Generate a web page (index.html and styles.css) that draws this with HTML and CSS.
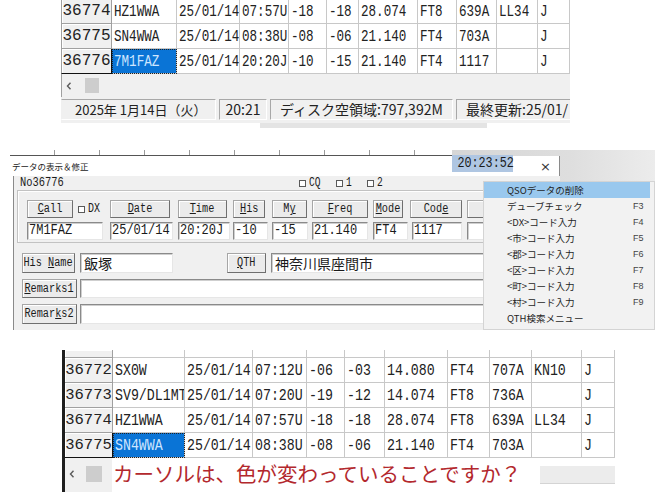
FILE: index.html
```html
<!DOCTYPE html>
<html lang="ja">
<head>
<meta charset="utf-8">
<title>QSO</title>
<link rel="stylesheet" href="styles.css">
</head>
<body>
<main class="page">

<section class="shot-top">
  <div class="grid g-top">
    <div class="row">
      <div class="c no"><span>36774</span></div>
      <div class="c"><span>HZ1WWA</span></div>
      <div class="c"><span>25/01/14</span></div>
      <div class="c"><span>07:57U</span></div>
      <div class="c"><span>-18</span></div>
      <div class="c"><span>-18</span></div>
      <div class="c"><span>28.074</span></div>
      <div class="c"><span>FT8</span></div>
      <div class="c"><span>639A</span></div>
      <div class="c"><span>LL34</span></div>
      <div class="c"><span>J</span></div>
    </div>
    <div class="row">
      <div class="c no"><span>36775</span></div>
      <div class="c"><span>SN4WWA</span></div>
      <div class="c"><span>25/01/14</span></div>
      <div class="c"><span>08:38U</span></div>
      <div class="c"><span>-08</span></div>
      <div class="c"><span>-06</span></div>
      <div class="c"><span>21.140</span></div>
      <div class="c"><span>FT4</span></div>
      <div class="c"><span>703A</span></div>
      <div class="c"><span></span></div>
      <div class="c"><span>J</span></div>
    </div>
    <div class="row">
      <div class="c no cur"><span>36776</span></div>
      <div class="c sel"><span>7M1FAZ</span></div>
      <div class="c"><span>25/01/14</span></div>
      <div class="c"><span>20:20J</span></div>
      <div class="c"><span>-10</span></div>
      <div class="c"><span>-15</span></div>
      <div class="c"><span>21.140</span></div>
      <div class="c"><span>FT4</span></div>
      <div class="c"><span>1117</span></div>
      <div class="c"><span></span></div>
      <div class="c"><span>J</span></div>
    </div>
  </div>
  <div class="hscroll">
    <svg class="arr" width="6" height="8" viewBox="0 0 6 8"><path d="M4.5 0.8 L1.5 4 L4.5 7.2" fill="none" stroke="#5a5a5a" stroke-width="1.4"/></svg>
    <span class="thumb"></span>
  </div>
  <div class="status">
    <div class="panel p1">2025年 1月14日（火）</div>
    <div class="panel p2">20:21</div>
    <div class="panel p3">ディスク空領域:797,392M</div>
    <div class="panel p4">最終更新:25/01/</div>
  </div>
  <div class="under"><span class="u-gray"></span></div>
</section>

<section class="shot-dialog">
  <div class="behind"></div>
  <div class="dialog">
    <div class="titlebar">
      <span class="title">データの表示＆修正</span>
      <span class="clock"><span>20:23:52</span></span>
      <span class="close">×</span>
    </div>
    <div class="dbody">
      <div class="norow">
        <span class="nolabel"><span>No36776</span></span>
        <span class="checks">
          <span class="cb"></span><span class="cbt">CQ</span>
          <span class="cb"></span><span class="cbt">1</span>
          <span class="cb"></span><span class="cbt">2</span>
        </span>
      </div>
      <div class="group">
        <div class="brow">
          <div class="cell-call">
            <div class="btn b-call"><span><u>C</u>all</span></div>
            <span class="cb dx"></span><span class="dxt">DX</span>
          </div>
          <div class="btn b-date"><span><u>D</u>ate</span></div>
          <div class="btn b-time"><span><u>T</u>ime</span></div>
          <div class="btn b-his"><span><u>H</u>is</span></div>
          <div class="btn b-my"><span>M<u>y</u></span></div>
          <div class="btn b-freq"><span><u>F</u>req</span></div>
          <div class="btn b-mode"><span><u>M</u>ode</span></div>
          <div class="btn b-code"><span>Cod<u>e</u></span></div>
          <div class="btn b-next"><span>Grid</span></div>
        </div>
        <div class="irow">
          <div class="inp i-call"><span>7M1FAZ</span></div>
          <div class="inp i-date"><span>25/01/14</span></div>
          <div class="inp i-time"><span>20:20J</span></div>
          <div class="inp i-his"><span>-10</span></div>
          <div class="inp i-my"><span>-15</span></div>
          <div class="inp i-freq"><span>21.140</span></div>
          <div class="inp i-mode"><span>FT4</span></div>
          <div class="inp i-code"><span>1117</span></div>
          <div class="inp i-next"><span></span></div>
        </div>
      </div>
      <div class="hrow">
        <div class="btn b-name"><span>His <u>N</u>ame</span></div>
        <div class="inp jp i-name">飯塚</div>
        <div class="btn b-qth"><span><u>Q</u>TH</span></div>
        <div class="inp jp i-qth">神奈川県座間市</div>
      </div>
      <div class="hrow r1">
        <div class="btn b-rem"><span><u>R</u>emarks1</span></div>
        <div class="inp i-rem"></div>
      </div>
      <div class="hrow r2">
        <div class="btn b-rem"><span>Remar<u>k</u>s2</span></div>
        <div class="inp i-rem"></div>
      </div>
    </div>
  </div>
  <div class="menu">
    <div class="mi hl"><span>QSOデータの削除</span><span class="k"></span></div>
    <div class="mi"><span>デューブチェック</span><span class="k">F3</span></div>
    <div class="mi"><span>&lt;DX&gt;コード入力</span><span class="k">F4</span></div>
    <div class="mi"><span>&lt;市&gt;コード入力</span><span class="k">F5</span></div>
    <div class="mi"><span>&lt;郡&gt;コード入力</span><span class="k">F6</span></div>
    <div class="mi"><span>&lt;区&gt;コード入力</span><span class="k">F7</span></div>
    <div class="mi"><span>&lt;町&gt;コード入力</span><span class="k">F8</span></div>
    <div class="mi"><span>&lt;村&gt;コード入力</span><span class="k">F9</span></div>
    <div class="mi"><span>QTH検索メニュー</span><span class="k"></span></div>
  </div>
</section>

<section class="shot-bottom">
  <div class="grid g-bot">
    <div class="row stub">
      <div class="c no"></div><div class="c"></div><div class="c"></div><div class="c"></div><div class="c"></div><div class="c"></div><div class="c"></div><div class="c"></div><div class="c"></div><div class="c"></div><div class="c"></div>
    </div>
    <div class="row">
      <div class="c no"><span>36772</span></div>
      <div class="c"><span>SX0W</span></div>
      <div class="c"><span>25/01/14</span></div>
      <div class="c"><span>07:12U</span></div>
      <div class="c"><span>-06</span></div>
      <div class="c"><span>-03</span></div>
      <div class="c"><span>14.080</span></div>
      <div class="c"><span>FT4</span></div>
      <div class="c"><span>707A</span></div>
      <div class="c"><span>KN10</span></div>
      <div class="c"><span>J</span></div>
    </div>
    <div class="row">
      <div class="c no"><span>36773</span></div>
      <div class="c"><span>SV9/DL1MT</span></div>
      <div class="c"><span>25/01/14</span></div>
      <div class="c"><span>07:20U</span></div>
      <div class="c"><span>-19</span></div>
      <div class="c"><span>-12</span></div>
      <div class="c"><span>14.074</span></div>
      <div class="c"><span>FT8</span></div>
      <div class="c"><span>736A</span></div>
      <div class="c"><span></span></div>
      <div class="c"><span>J</span></div>
    </div>
    <div class="row">
      <div class="c no"><span>36774</span></div>
      <div class="c"><span>HZ1WWA</span></div>
      <div class="c"><span>25/01/14</span></div>
      <div class="c"><span>07:57U</span></div>
      <div class="c"><span>-18</span></div>
      <div class="c"><span>-18</span></div>
      <div class="c"><span>28.074</span></div>
      <div class="c"><span>FT8</span></div>
      <div class="c"><span>639A</span></div>
      <div class="c"><span>LL34</span></div>
      <div class="c"><span>J</span></div>
    </div>
    <div class="row">
      <div class="c no cur"><span>36775</span></div>
      <div class="c sel"><span>SN4WWA</span></div>
      <div class="c"><span>25/01/14</span></div>
      <div class="c"><span>08:38U</span></div>
      <div class="c"><span>-08</span></div>
      <div class="c"><span>-06</span></div>
      <div class="c"><span>21.140</span></div>
      <div class="c"><span>FT4</span></div>
      <div class="c"><span>703A</span></div>
      <div class="c"><span></span></div>
      <div class="c"><span>J</span></div>
    </div>
  </div>
  <div class="bscroll">
    <div class="bs-left">
      <svg class="arr" width="6" height="8" viewBox="0 0 6 8"><path d="M4.5 0.8 L1.5 4 L4.5 7.2" fill="none" stroke="#5a5a5a" stroke-width="1.4"/></svg>
      <span class="thumb"></span>
    </div>
    <div class="note">カーソルは、色が変わっていることですか？</div>
    <div class="bs-right"><span class="bar"></span></div>
  </div>
</section>

</main>
</body>
</html>
```

FILE: styles.css
```css
* { box-sizing: border-box; margin: 0; padding: 0; }
html, body { background: #fff; }
body {
  width: 655px;
  height: 492px;
  overflow: hidden;
  font-family: "Noto Sans CJK JP", sans-serif;
  color: #1b1b1b;
}
.page { display: flex; flex-direction: column; }

/* ---------- grids ---------- */
.grid .row { display: grid; height: 25px; }
.g-top .row { grid-template-columns: 51px 65px 63px 49px 38px 32px 59px 39px 40px 41px 32px; }
.g-bot .row { grid-template-columns: 48px 72px 68px 54px 38px 40px 63px 42px 42px 50px 33px; }
.g-bot .row.stub { height: 8px; }

.c {
  border-right: 1px solid #c8c8c8;
  border-bottom: 1px solid #c8c8c8;
  overflow: hidden;
  white-space: nowrap;
  font-family: "Liberation Mono", monospace;
  font-size: 17px;
  line-height: 25px;
  padding-left: 2px;
  color: #222;
}
.c span { display: inline-block; transform: scaleX(0.74); transform-origin: left center; }
.g-bot .c span { transform: scaleX(0.78); }
.c.no {
  background: #f0f0f0;
  border-left: 1px solid #a0a0a0;
  border-right-color: #a0a0a0;
  border-bottom-color: #a0a0a0;
  box-shadow: inset 1px 1px #fff;
  text-align: center;
  padding: 0;
  font-size: 16px;
}
.g-bot .c.no { font-size: 15.5px; border-left: none; }
.c.no span, .g-bot .c.no span { transform: none; }
.c.no.cur { border-right-color: #111; border-bottom-color: #111; }
.c.sel {
  background: #0a74d6;
  color: #cfe6ff;
  outline: 1px dotted #222;
  outline-offset: -1px;
  box-shadow: inset 0 0 0 1px #0a74d6;
}

/* ---------- top shot ---------- */
.shot-top { margin: -1px 0 0 61px; width: 509px; }
.hscroll {
  height: 23px;
  background: #f0f0f0;
  border-left: 1px solid #a0a0a0;
  display: flex;
  align-items: center;
  padding-left: 4px;
  gap: 13px;
}
.thumb { width: 14px; height: 15px; background: #cdcdcd; }
.status {
  height: 26px;
  background: #f0f0f0;
  display: flex;
  gap: 3px;
  padding: 2px 0 3px;
  font-size: 14px;
  color: #222;
}
.panel {
  border: 1px solid;
  border-color: #a8a8a8 #fff #fff #a8a8a8;
  line-height: 19px;
  white-space: nowrap;
  overflow: hidden;
}
.p1 { width: 155px; padding-left: 13px; border-left-color: transparent; font-size: 13px; }
.p2 { width: 48px; text-align: center; }
.p3 { width: 183px; padding-left: 9px; }
.p4 { flex: 1; padding-left: 9px; border-right: none; }
.under { height: 5px; display: flex; }
.u-gray { margin-left: 199px; width: 227px; background: #e4e4e4; }

/* ---------- dialog shot ---------- */
.shot-dialog {
  position: relative;
  margin: 22px 0 0 10px;
  width: 645px;
  height: 180px;
  background: linear-gradient(to right, #fff 0, #fff 442px, #d6d6d6 442px, #dedede 560px, #ececec 645px);
}
.behind {
  width: 442px;
  height: 6px;
  border-bottom: 1px solid #555;
  background: repeating-linear-gradient(to right, transparent 0 44px, #9a9a9a 44px 45px);
}
.dialog { width: 550px; }
.titlebar { height: 20px; display: flex; background: #fff; }
.title { font-size: 8.5px; line-height: 20px; padding-left: 2px; color: #222; }
.clock {
  margin-left: auto;
  width: 61px;
  height: 17px;
  margin-top: -1px;
  background: #afc6e2;
  text-align: center;
  font-family: "Liberation Mono", monospace;
  font-size: 14px;
  line-height: 17px;
  color: #1a1a1a;
}
.clock span { display: inline-block; transform: scaleX(0.84); }
.close {
  width: 47px;
  text-align: right;
  padding-right: 8px;
  border-right: 1px solid #8a8a8a;
  font-family: "DejaVu Sans", sans-serif;
  font-size: 13px;
  line-height: 22px;
  color: #333;
}
.dbody {
  height: 154px;
  margin-left: 3px;
  border-left: 1px solid #8a8a8a;
  background: #f0f0f0;
}
.norow { height: 14px; display: flex; align-items: center; }
.nolabel {
  width: 285px;
  padding-left: 6px;
  font-family: "Liberation Mono", monospace;
  font-size: 13px;
  line-height: 14px;
}
.nolabel span { display: inline-block; transform: scaleX(0.8); transform-origin: left center; }
.checks { display: flex; align-items: center; font-family: "Liberation Mono", monospace; font-size: 12px; }
.cb { display: inline-block; width: 7px; height: 7px; border: 1px solid #5a5a5a; background: #fff; }
.cbt { display: inline-block; transform: scaleX(0.8); transform-origin: left center; margin: 0 13px 0 3px; }

.group {
  margin-left: 3px;
  width: 540px;
  height: 53px;
  border: 1px solid #c2c2c2;
  box-shadow: inset 1px 1px #fff;
  padding: 9px 0 0 9px;
}
.brow, .irow { display: grid; grid-template-columns: 83px 68px 55px 39px 40px 61px 38px 56px 60px; height: 18px; }
.irow { margin-top: 4px; }
.cell-call { display: flex; align-items: center; }
.dx { margin-left: 5px; }
.dxt {
  margin-left: 3px;
  font-family: "Liberation Mono", monospace;
  font-size: 12.5px;
  display: inline-block;
  transform: scaleX(0.8);
  transform-origin: left center;
}

.btn {
  height: 100%;
  display: flex;
  justify-content: center;
  align-items: center;
  background: #ebebeb;
  border: 1px solid #a6a6a6;
  border-right-color: #6f6f6f;
  border-bottom-color: #6f6f6f;
  box-shadow: inset 1px 1px #fff;
  font-family: "Liberation Mono", monospace;
  font-size: 12.5px;
  line-height: 16px;
  color: #1b1b1b;
  white-space: nowrap;
  overflow: hidden;
}
.btn span { display: inline-block; flex: none; transform: scaleX(0.82); transform-origin: center; }
.btn u { text-underline-offset: 1px; }
.b-call { width: 46px; }
.b-date { width: 60px; }
.b-time { width: 49px; }
.b-his { width: 32px; }
.b-my { width: 35px; }
.b-freq { width: 56px; }
.b-mode { width: 30px; }
.b-code { width: 52px; margin-left: -1px; }
.b-next { width: 60px; }

.inp {
  height: 18px;
  background: #fff;
  border: 1px solid;
  border-color: #8a8a8a #e6e6e6 #e6e6e6 #8a8a8a;
  box-shadow: inset 1px 1px #cfcfcf;
  font-family: "Liberation Mono", monospace;
  font-size: 15px;
  line-height: 16px;
  padding-left: 1px;
  white-space: nowrap;
  overflow: hidden;
  color: #1a1a1a;
}
.inp span { display: inline-block; transform: scaleX(0.8); transform-origin: left center; }
.i-call { width: 76px; }
.i-date { width: 63px; }
.i-time { width: 52px; }
.i-his { width: 35px; }
.i-my { width: 36px; }
.i-freq { width: 56px; }
.i-mode { width: 35px; }
.i-code { width: 50px; margin-left: 1px; }
.i-next { width: 60px; }

.hrow { display: flex; height: 20px; margin: 10px 0 0 8px; }
.hrow.r1 { height: 19px; margin-top: 6px; }
.hrow.r2 { height: 20px; margin-top: 6px; }
.hrow .inp { height: 100%; }
.inp.jp { font-family: "Noto Sans CJK JP", sans-serif; font-size: 14px; line-height: 18px; padding-left: 3px; }
.b-name { width: 53px; }
.i-name { width: 93px; margin-left: 5px; }
.b-qth { width: 39px; margin-left: 54px; }
.i-qth { width: 270px; margin-left: 5px; }
.b-rem { width: 55px; }
.i-rem { width: 460px; margin-left: 3px; }

.menu {
  position: absolute;
  left: 473px;
  top: 31px;
  width: 172px;
  height: 149px;
  background: #f2f2f2;
  border: 1px solid #d4d4d4;
  padding-right: 4px;
  font-size: 9.5px;
  color: #1f1f1f;
}
.mi {
  display: grid;
  grid-template-columns: 126px 1fr;
  height: 16px;
  line-height: 16px;
  padding-left: 23px;
  white-space: nowrap;
}
.mi.hl { background: #99c8ee; }
.mi .k { color: #444; font-family: "Liberation Sans", sans-serif; font-size: 9px; }

/* ---------- bottom shot ---------- */
.shot-bottom {
  margin: 20px 0 0 62px;
  width: 593px;
  height: 142px;
  border-left: 3px solid #1e1e1e;
}
.bscroll { display: flex; height: 34px; }
.bs-left {
  width: 47px;
  background: #f0f0f0;
  display: flex;
  align-items: center;
  padding: 0 0 2px 4px;
  gap: 11px;
}
.bs-left .thumb { height: 16px; width: 16px; }
.note {
  width: 416px;
  background: #fff;
  color: #b3282d;
  font-size: 20.5px;
  line-height: 30px;
  padding-left: 1px;
  white-space: nowrap;
}
.bs-right { flex: 1; }
.bar {
  display: block;
  margin: 8px 0 0 12px;
  width: 75px;
  height: 18px;
  background: #ececec;
  border-bottom: 1px solid #d4d4d4;
}
```
